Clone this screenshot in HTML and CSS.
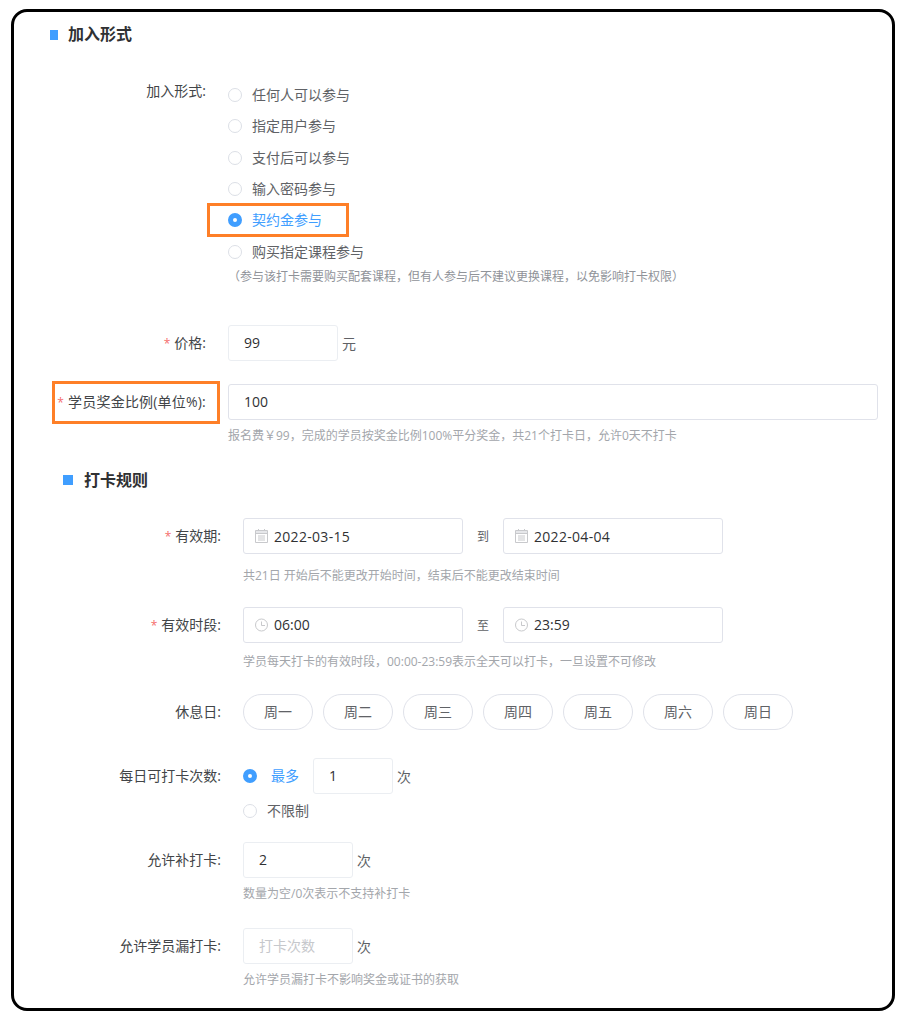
FILE: index.html
```html
<!DOCTYPE html>
<html lang="zh-CN">
<head>
<meta charset="utf-8">
<title>加入形式</title>
<link rel="stylesheet" href="styles.css">
</head>
<body>
<main class="frame">
  <h2 class="title title-a"><i class="mark mark-a"></i>加入形式</h2>
  <section class="sec-a">
    <div class="row row-join">
      <div class="label label-top">加入形式:</div>
      <div class="col">
        <div class="radio"><i class="dot"></i>任何人可以参与</div>
        <div class="radio"><i class="dot"></i>指定用户参与</div>
        <div class="radio"><i class="dot"></i>支付后可以参与</div>
        <div class="radio"><i class="dot"></i>输入密码参与</div>
        <div class="radio on"><i class="dot"></i>契约金参与<span class="note note-radio"></span></div>
        <div class="radio"><i class="dot"></i>购买指定课程参与</div>
      </div>
    </div>
    <p class="join-hint">（参与该打卡需要购买配套课程，但有人参与后不建议更换课程，以免影响打卡权限）</p>
    <div class="row row-price">
      <div class="label"><em>*</em>价格:</div>
      <div class="field w110">99</div><span class="unit">元</span>
    </div>
    <div class="row row-bonus">
      <span class="note note-label"></span>
      <div class="label label-wide"><em>*</em>学员奖金比例(单位%):</div>
      <div class="field wfull">100</div>
    </div>
    <p class="hint hint-a">报名费￥99，完成的学员按奖金比例100%平分奖金，共21个打卡日，允许0天不打卡</p>
  </section>
  <h2 class="title title-b"><i class="mark mark-b"></i>打卡规则</h2>
  <section class="sec-b">
    <div class="row row-date">
      <div class="label"><em>*</em>有效期:</div>
      <div class="field picker date">
        <svg class="ico" viewBox="0 0 14 14"><path d="M.5 1.5h12v3H.5z" fill="#e6e7ea"/><path d="M.5 1.5h12v12H.5zM.5 4.5h12M3.5 0v2M9.5 0v2M3 7h7M3 9h7M3 11h7" fill="none" stroke="#c8c9cc"/></svg>2022-03-15
      </div>
      <span class="sep">到</span>
      <div class="field picker date">
        <svg class="ico" viewBox="0 0 14 14"><path d="M.5 1.5h12v3H.5z" fill="#e6e7ea"/><path d="M.5 1.5h12v12H.5zM.5 4.5h12M3.5 0v2M9.5 0v2M3 7h7M3 9h7M3 11h7" fill="none" stroke="#c8c9cc"/></svg>2022-04-04
      </div>
    </div>
    <p class="hint hint-date">共21日 开始后不能更改开始时间，结束后不能更改结束时间</p>
    <div class="row row-time">
      <div class="label"><em>*</em>有效时段:</div>
      <div class="field picker">
        <svg class="ico" viewBox="0 0 14 14"><circle cx="6.5" cy="7" r="6" fill="none" stroke="#c8c9cc"/><path d="M6.5 3.5v4h3.5" fill="none" stroke="#c8c9cc"/></svg>06:00
      </div>
      <span class="sep">至</span>
      <div class="field picker">
        <svg class="ico" viewBox="0 0 14 14"><circle cx="6.5" cy="7" r="6" fill="none" stroke="#c8c9cc"/><path d="M6.5 3.5v4h3.5" fill="none" stroke="#c8c9cc"/></svg>23:59
      </div>
    </div>
    <p class="hint hint-time">学员每天打卡的有效时段，00:00-23:59表示全天可以打卡，一旦设置不可修改</p>
    <div class="row row-rest">
      <div class="label">休息日:</div>
      <div class="pills">
        <span class="pill">周一</span><span class="pill">周二</span><span class="pill">周三</span><span class="pill">周四</span><span class="pill">周五</span><span class="pill">周六</span><span class="pill">周日</span>
      </div>
    </div>
    <div class="row row-daily">
      <div class="label">每日可打卡次数:</div>
      <div class="radio on inline"><i class="dot"></i>最多</div>
      <div class="field w80">1</div><span class="unit">次</span>
    </div>
    <div class="row row-nolimit">
      <div class="label"></div>
      <div class="radio tight"><i class="dot"></i>不限制</div>
    </div>
    <div class="row row-make">
      <div class="label">允许补打卡:</div>
      <div class="field w110">2</div><span class="unit">次</span>
    </div>
    <p class="hint hint-make">数量为空/0次表示不支持补打卡</p>
    <div class="row row-miss">
      <div class="label">允许学员漏打卡:</div>
      <div class="field w110 empty">打卡次数</div><span class="unit">次</span>
    </div>
    <p class="hint hint-miss">允许学员漏打卡不影响奖金或证书的获取</p>
  </section>
</main>
</body>
</html>
```

FILE: styles.css
```css
* { box-sizing: border-box; }
html, body { margin: 0; background: #fff; }
body {
  padding: 9px 12px 0 11px;
  font-family: "Open Sans", "Noto Sans CJK SC", sans-serif;
  font-size: 14px;
  color: #606266;
}
.frame {
  height: 1002px;
  border: 3px solid #000;
  border-radius: 16px;
  overflow: hidden;
  background: #fff;
}
.title {
  display: flex;
  align-items: center;
  height: 24px;
  margin: 0;
  font-size: 16px;
  font-weight: 700;
  line-height: 24px;
  color: #303133;
}
.title-a { margin-top: 10px; padding-left: 36px; }
.title-b { margin-top: 23px; padding-left: 49px; }
.mark { display: block; background: #409eff; flex: none; }
.mark-a { width: 8px; height: 10px; margin-top: 2px; margin-right: 10px; }
.mark-b { width: 10px; height: 10px; margin-right: 11px; }

.row { display: flex; position: relative; align-items: center; height: 36px; }
.label {
  flex: none;
  height: 36px;
  padding-right: 2px;
  line-height: 35px;
  margin-right: 20px;
  text-align: right;
  color: #424548;
  white-space: nowrap;
}
.sec-a .label { width: 194px; }
.sec-b .label { width: 209px; }
.label em { margin-right: 4px; font-style: normal; color: #f56c6c; font-size: 12px; }
.label-top { height: 24px; line-height: 24px; }
.label-wide { letter-spacing: .2px; }

.row-join { height: 188px; align-items: flex-start; margin-top: 33px; }
.col { display: flex; flex-direction: column; padding-top: .4px; }
.radio { display: flex; position: relative; align-items: center; height: 31.33px; padding-bottom: 2px; white-space: nowrap; }
.dot {
  display: block;
  flex: none;
  width: 14px;
  height: 14px;
  margin-top: 2px;
  margin-right: 10px;
  border: 1px solid #dcdfe6;
  border-radius: 50%;
  background: #fff;
}
.radio.on { color: #409eff; }
.radio.on .dot { border: 5px solid #409eff; }
.radio.inline { height: 36px; margin-right: 14px; }
.radio.inline .dot { margin-right: 14px; }
.radio.tight { height: 24px; }

.note { position: absolute; border: 3px solid #fe7f27; pointer-events: none; }
.note-radio { left: -21px; top: -2px; width: 142px; height: 34px; }
.note-label { left: 38px; top: -3px; width: 168px; height: 43px; }

.join-hint { margin: 1px 0 0 214px; height: 18px; font-size: 12px; line-height: 18px; color: #909399; white-space: nowrap; }
.hint { height: 18px; margin: 0; font-size: 12px; line-height: 18px; color: #a3a6ab; white-space: nowrap; }
.sec-a .hint { margin-left: 214px; }
.sec-b .hint { margin-left: 229px; }

.field {
  flex: none;
  height: 36px;
  padding: 0 15px;
  border: 1px solid #e0e2ea;
  border-radius: 3px;
  line-height: 34px;
  color: #303133;
}
.w110 { width: 110px; border-color: #ebeef2; }
.w80 { width: 80px; border-color: #ebeef2; }
.wfull { width: 650px; }
.empty { color: #c6c8cc; }
.unit { margin-left: 4px; color: #606266; }
.picker { display: flex; align-items: center; width: 220px; padding: 0 0 0 11px; }
.date { padding-top: 1px; letter-spacing: .3px; }
.date .ico { margin-top: -1px; }
.ico { display: block; flex: none; width: 14px; height: 14px; margin-right: 5px; }
.sep { display: block; width: 40px; text-align: center; font-size: 12px; color: #606266; }

.pills { display: flex; gap: 10px; }
.pill {
  display: block;
  width: 70px;
  height: 36px;
  border: 1px solid #e0e2ea;
  border-radius: 18px;
  line-height: 34px;
  text-align: center;
  color: #606266;
}

.row-price { margin-top: 39px; }
.row-bonus { margin-top: 23px; }
.hint-a { margin-top: 7px; }
.row-date { margin-top: 26px; }
.hint-date { margin-top: 13px; }
.row-time { margin-top: 22px; }
.hint-time { margin-top: 10px; }
.row-rest { margin-top: 23px; }
.row-daily { margin-top: 28px; }
.row-nolimit { margin-top: 5px; height: 24px; }
.row-nolimit .label { height: 24px; }
.row-make { margin-top: 19px; }
.hint-make { margin-top: 7px; }
.row-miss { margin-top: 25px; }
.hint-miss { margin-top: 7px; }
```
